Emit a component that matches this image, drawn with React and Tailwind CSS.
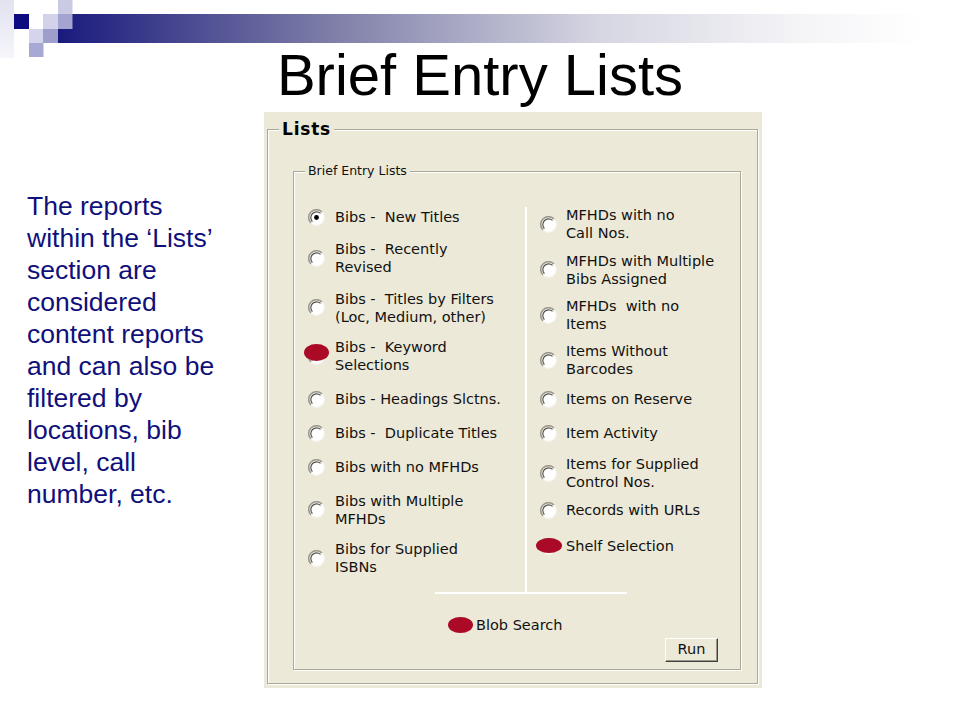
import React from "react";

function Radio({ checked }) {
  return (
    <svg width="17" height="17" viewBox="0 0 17 17" className="block shrink-0">
      <circle cx="8.5" cy="8.5" r="7.8" fill="#ffffff" />
      <path d="M3 14 A7.6 7.6 0 0 1 14 3" stroke="#9a988a" strokeWidth="1.6" fill="none" />
      <path d="M4.4 12.6 A5.8 5.8 0 0 1 12.6 4.4" stroke="#55534a" strokeWidth="1.2" fill="none" />
      <path d="M14 3 A7.6 7.6 0 0 1 3 14" stroke="#f6f4ee" strokeWidth="1.2" fill="none" />
      {checked && <circle cx="8.5" cy="8.5" r="2.4" fill="#000000" />}
    </svg>
  );
}

function Item({ lines, checked, blob, mt, textMl }) {
  return (
    <div className={`flex items-center ${mt}`}>
      <div className="relative w-[17px] h-[17px] shrink-0">
        <Radio checked={checked} />
        {blob === "keyword" && (
          <div className="absolute left-[-4px] top-[-4px] w-[25px] h-[17px] rounded-[50%] bg-[#ab0a26]" />
        )}
        {blob === "shelf" && (
          <div className="absolute left-[-4px] top-[0px] w-[26px] h-[15px] rounded-[50%] bg-[#ab0a26]" />
        )}
      </div>
      <div className={`${textMl} text-[14.5px] leading-[18px] whitespace-pre text-[#111]`}>
        {lines.map((l, i) => (
          <div key={i}>{l}</div>
        ))}
      </div>
    </div>
  );
}

const leftItems = [
  { lines: ["Bibs -  New Titles"], checked: true, mt: "mt-[2px]" },
  { lines: ["Bibs -  Recently", "Revised"], mt: "mt-[14px]" },
  { lines: ["Bibs -  Titles by Filters", "(Loc, Medium, other)"], mt: "mt-[13.5px]" },
  { lines: ["Bibs -  Keyword", "Selections"], blob: "keyword", mt: "mt-[12.5px]" },
  { lines: ["Bibs - Headings Slctns."], mt: "mt-[16px]" },
  { lines: ["Bibs -  Duplicate Titles"], mt: "mt-[16px]" },
  { lines: ["Bibs with no MFHDs"], mt: "mt-[16px]" },
  { lines: ["Bibs with Multiple", "MFHDs"], mt: "mt-[15.5px]" },
  { lines: ["Bibs for Supplied", "ISBNs"], mt: "mt-[12.5px]" },
];

const rightItems = [
  { lines: ["MFHDs with no", "Call Nos."], mt: "mt-[0px]" },
  { lines: ["MFHDs with Multiple", "Bibs Assigned"], mt: "mt-[9.5px]" },
  { lines: ["MFHDs  with no", "Items"], mt: "mt-[9.5px]" },
  { lines: ["Items Without", "Barcodes"], mt: "mt-[9px]" },
  { lines: ["Items on Reserve"], mt: "mt-[12px]" },
  { lines: ["Item Activity"], mt: "mt-[16px]" },
  { lines: ["Items for Supplied", "Control Nos."], mt: "mt-[13px]" },
  { lines: ["Records with URLs"], mt: "mt-[10px]" },
  { lines: ["Shelf Selection"], blob: "shelf", mt: "mt-[18px]" },
];

export default function App() {
  return (
    <div className="w-[960px] h-[720px] bg-white overflow-hidden font-['Liberation_Sans',Arial,sans-serif]">
      {/* Header bar */}
      <div className="relative h-[46px] pt-[14px]">
        <div className="ml-[58px] h-[29px] bg-[linear-gradient(to_right,#1a1a7e_0%,#7a7aa6_29%,#d6d6e2_60%,#f4f4f7_82%,#ffffff_96%)]" />
        <svg width="73" height="58" viewBox="0 0 73 58" className="absolute left-0 top-0">
          <defs>
            <linearGradient id="strip" x1="0" y1="0" x2="0" y2="1">
              <stop offset="0" stopColor="#e2e2f1" />
              <stop offset="1" stopColor="#f6f6fb" />
            </linearGradient>
          </defs>
          <rect x="0" y="0" width="14" height="58" fill="url(#strip)" />
          <rect x="58" y="0" width="14.5" height="14" fill="#cacae4" />
          <rect x="14" y="14" width="15" height="15" fill="#0c0c80" />
          <rect x="43" y="14" width="15" height="15" fill="#d2d2ea" />
          <rect x="58" y="14" width="14.5" height="15" fill="#a4a4d0" />
          <rect x="29" y="29" width="14.5" height="14" fill="#d4d4ec" />
          <rect x="43" y="29" width="15" height="14" fill="#9e9ecc" />
          <rect x="29" y="43" width="14.5" height="14" fill="#a8a8d4" />
        </svg>
      </div>

      {/* Title */}
      <div className="h-[58px] text-center text-[58px] leading-[58px] text-black">Brief Entry Lists</div>

      {/* Body */}
      <div className="flex mt-[8px]">
        <div className="w-[264px] pl-[27px] pt-[78px] text-[26.5px] leading-[32px] text-[#10107a]">
          The reports
          <br />
          within the ‘Lists’
          <br />
          section are
          <br />
          considered
          <br />
          content reports
          <br />
          and can also be
          <br />
          filtered by
          <br />
          locations, bib
          <br />
          level, call
          <br />
          number, etc.
        </div>

        {/* Dialog screenshot */}
        <div className="w-[498px] h-[576px] bg-[#ece9d8] pt-[7px] pl-[3px] font-['DejaVu_Sans',Verdana,sans-serif]">
          <fieldset className="w-[491px] h-[565px] border border-[#aca899] shadow-[inset_1px_1px_0_#ffffff,1px_1px_0_#ffffff]">
            <legend className="ml-[11px] px-[3px] bg-[#ece9d8] text-[17px] leading-[20px] font-bold tracking-[0.8px] text-black">
              Lists
            </legend>
            <fieldset className="ml-[25px] mt-[24px] w-[448px] h-[507px] border border-[#aca899] shadow-[inset_1px_1px_0_#ffffff,1px_1px_0_#ffffff]">
              <legend className="ml-[11px] px-[3px] bg-[#ece9d8] text-[12.5px] leading-[16px] text-[#111]">
                Brief Entry Lists
              </legend>
              <div className="flex flex-col">
                <div className="flex h-[386px] mt-[27px]">
                  <div className="w-[231px] pl-[14px] flex flex-col">
                    {leftItems.map((it, i) => (
                      <Item key={i} {...it} textMl="ml-[10px]" />
                    ))}
                  </div>
                  <div className="w-[2px] mt-[1px] bg-white" />
                  <div className="flex-1 pl-[13px] flex flex-col">
                    {rightItems.map((it, i) => (
                      <Item key={i} {...it} textMl="ml-[9px]" />
                    ))}
                  </div>
                </div>
                <div className="ml-[141px] w-[192px] h-[2px] bg-white" />
                <div className="flex items-center mt-[22px] ml-[154px]">
                  <div className="w-[25px] h-[16px] rounded-[50%] bg-[#ab0a26]" />
                  <div className="ml-[3px] text-[14.5px] leading-[18px] text-[#111]">Blob Search</div>
                </div>
                <div className="self-end mr-[22px] mt-[4px] w-[53px] h-[24px] flex items-center justify-center bg-[#ece9d8] border border-t-white border-l-white border-b-[#404040] border-r-[#404040] shadow-[inset_-1px_-1px_0_#9a9788] text-[14.5px] text-[#111]">
                  Run
                </div>
              </div>
            </fieldset>
          </fieldset>
        </div>
      </div>
    </div>
  );
}
